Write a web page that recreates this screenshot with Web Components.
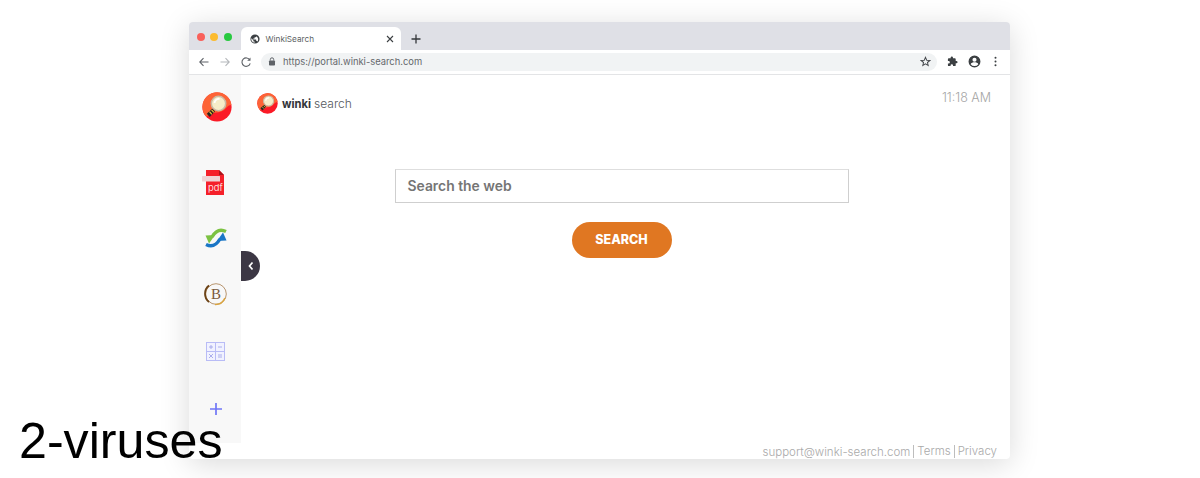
<!DOCTYPE html>
<html>
<head>
<meta charset="utf-8">
<title>WinkiSearch</title>
<style>
    html, body { margin: 0; height: 100%; background: #fff; }
    body { width: 1200px; height: 478px; overflow: hidden; position: relative; font-family: "Inter", "Liberation Sans", sans-serif; }
</style>
</head>
<body>
<browser-window>
    <browser-tabs slot="tabs" title="WinkiSearch"></browser-tabs>
    <browser-toolbar slot="toolbar" url="https://portal.winki-search.com"></browser-toolbar>
    <app-sidebar slot="side"></app-sidebar>
    <search-page slot="page"></search-page>
</browser-window>
<water-mark>2-viruses</water-mark>

<script>
    (() => {
        const logoSvg = `
            <svg viewBox="0 0 30 30" width="100%" height="100%">
                <circle cx="15" cy="15" r="14.6" fill="#fb1a26"/>
                <path d="M.5 15A14.5 14.5 0 0 1 29.4 13C24 13 24 20 15 20.500 9 20.800 6 23 4.500 25A14.500 14.500 0 0 1 .5 15Z" fill="#fd6336"/>
                <path d="M10.500 16.500 4.800 21.800 7.800 25 13 19.500Z" fill="#2b2620"/>
                <path d="M7.500 19.700 9.800 22.300M9.600 17.900 11.800 20.300" stroke="#e8c43a" stroke-width="1.200"/>
                <circle cx="16.500" cy="11.500" r="7.200" fill="#f6ecc8" stroke="#c9b9a4" stroke-width="1.500"/>
                <path d="M12.500 11A4.300 4.300 0 0 1 17.500 7" fill="none" stroke="#fff" stroke-width="1.800"/>
            </svg>`;

        const define = (name, css, html) => {
            customElements.define(name, class extends HTMLElement {
                constructor() {
                    super();
                    this.attachShadow({ mode: "open" }).innerHTML =
                        `<style>${css}</style>` + html(this);
                }
            });
        };

        define("browser-window", `
            :host {
                display: grid;
                position: absolute;
                left: 189px; top: 22px;
                width: 821px; height: 437px;
                grid-template-columns: 52px 1fr;
                grid-template-rows: 28px 25px 368px 16px;
                background: #fff;
                border-radius: 4px;
                box-shadow: 0 5px 30px rgba(0,0,0,.15);
                overflow: hidden;
            }
            .tabs, .toolbar { grid-column: 1 / 3; }
            .side { grid-column: 1; grid-row: 3; }
            .page { grid-column: 2; grid-row: 3 / 5; position: relative; }
        `, () => `
            <div class="tabs"><slot name="tabs"></slot></div>
            <div class="toolbar"><slot name="toolbar"></slot></div>
            <div class="side"><slot name="side"></slot></div>
            <div class="page"><slot name="page"></slot></div>
        `);

        define("browser-tabs", `
            :host { display: flex; height: 28px; background: #dfe0e6; align-items: flex-end; box-sizing: border-box; padding-left: 8px; }
            .lights { display: flex; gap: 5.400px; align-self: flex-start; margin-top: 10.500px; width: 44px; }
            .lights i { width: 8px; height: 8px; border-radius: 50%; flex: none; }
            .tab {
                width: 160px; height: 23px; box-sizing: border-box;
                background: #fff; border-radius: 6px 6px 0 0;
                display: flex; align-items: center; padding: 0 7px 0 9px; gap: 5.500px;
                font: 8.200px "Inter", "Liberation Sans", sans-serif; color: #5c5f63;
            }
            .tab span { flex: 1; }
            .new { margin: 0 0 4px 8px; width: 14px; height: 14px; display: block; }
        `, el => `
            <div class="lights"><i style="background:#f9605a"></i><i style="background:#fcbb2e"></i><i style="background:#28c940"></i></div>
            <div class="tab">
                <svg width="10" height="10" viewBox="0 0 24 24"><path fill="#3c4043" d="M12 1a11 11 0 1 0 0 22 11 11 0 0 0 0-22Zm-1 19.900A9 9 0 0 1 3.200 10L8 15v1a2 2 0 0 0 2 2h1Zm7-3A2 2 0 0 0 16 17h-1v-3a1 1 0 0 0-1-1H8v-2h2a1 1 0 0 0 1-1V8h2a2 2 0 0 0 2-2v-.9a9 9 0 0 1 3 12.800Z"/></svg>
                <span>${el.getAttribute("title")}</span>
                <svg width="8" height="8" viewBox="0 0 8 8"><path d="M1 1 7 7M7 1 1 7" stroke="#3c4043" stroke-width="1.100"/></svg>
            </div>
            <svg class="new" viewBox="0 0 14 14"><path d="M7 2.500V11.500M2.500 7H11.500" stroke="#34373b" stroke-width="1.300"/></svg>
        `);

        define("browser-toolbar", `
            :host { display: flex; align-items: center; height: 25px; box-sizing: border-box; background: #fff; border-bottom: 1px solid #e3e4e6; padding: 0 9px 1px 9px; }
            .nav { display: flex; align-items: center; gap: 9px; width: 63px; }
            .nav svg { display: block; }
            .omni {
                width: 676px; height: 18px; box-sizing: border-box;
                border-radius: 9px; background: #f1f3f4;
                display: flex; align-items: center; padding: 0 6px 0 7px; gap: 7px;
                font: 9.400px "Inter", "Liberation Sans", sans-serif; color: #65686c;
            }
            .omni span { flex: 1; }
            .ext { display: flex; align-items: center; gap: 10px; margin-left: 10px; }
            .dots { margin-left: 3px; }
        `, el => `
            <div class="nav">
                <svg width="12" height="12" viewBox="0 0 12 12"><path d="M10.500 6H2M5.500 2.200 1.800 6 5.500 9.800" fill="none" stroke="#5f6368" stroke-width="1.100"/></svg>
                <svg width="12" height="12" viewBox="0 0 12 12"><path d="M1.500 6H10M6.500 2.200 10.200 6 6.500 9.800" fill="none" stroke="#b4b7bb" stroke-width="1.100"/></svg>
                <svg width="12" height="12" viewBox="0 0 12 12"><path d="M9.800 4A4.200 4.200 0 1 0 10.200 7.300" fill="none" stroke="#5f6368" stroke-width="1.100"/><path d="M10.500 1.500V4.800H7.200Z" fill="#5f6368"/></svg>
            </div>
            <div class="omni">
                <svg width="8" height="9" viewBox="0 0 8 9"><rect x="1" y="3.500" width="6" height="5" rx=".8" fill="#5f6368"/><path d="M2.300 3.500V2.500a1.700 1.700 0 0 1 3.400 0v1" fill="none" stroke="#5f6368"/></svg>
                <span>${el.getAttribute("url")}</span>
                <svg width="11" height="11" viewBox="0 0 24 24"><path d="M12 3l2.700 6.200 6.700.6-5.100 4.400 1.600 6.600L12 17.300l-5.900 3.500 1.600-6.600L2.600 9.800l6.700-.6Z" fill="none" stroke="#4a4d51" stroke-width="2.200"/></svg>
            </div>
            <div class="ext">
                <svg width="11" height="11" viewBox="0 0 24 24"><path fill="#3c4043" d="M20.500 11H19V7a2 2 0 0 0-2-2h-4V3.500a2.500 2.500 0 0 0-5 0V5H4a2 2 0 0 0-2 2v3.800h1.500a2.700 2.700 0 0 1 0 5.400H2V20a2 2 0 0 0 2 2h3.800v-1.500a2.700 2.700 0 0 1 5.400 0V22H17a2 2 0 0 0 2-2v-4h1.500a2.500 2.500 0 0 0 0-5Z"/></svg>
                <svg width="13" height="13" viewBox="0 0 24 24"><path fill="#3c4043" d="M12 1a11 11 0 1 0 0 22 11 11 0 0 0 0-22Zm0 4a3.800 3.800 0 1 1 0 7.600A3.800 3.800 0 0 1 12 5Zm0 15.500a8.600 8.600 0 0 1-7-3.600c.1-2.300 4.700-3.500 7-3.500s6.900 1.200 7 3.500a8.600 8.600 0 0 1-7 3.600Z"/></svg>
                <svg class="dots" width="3" height="11" viewBox="0 0 3 11"><circle cx="1.500" cy="1.800" r="1" fill="#3c4043"/><circle cx="1.500" cy="5.500" r="1" fill="#3c4043"/><circle cx="1.500" cy="9.200" r="1" fill="#3c4043"/></svg>
            </div>
        `);

        define("app-sidebar", `
            :host { display: flex; flex-direction: column; align-items: center; height: 368px; background: #f8f8f8; box-sizing: border-box; padding-top: 17px; }
            svg { display: block; flex: none; }
            .logo { width: 30px; height: 30px; margin: 0 0 48px 3px; }
            .pdf { margin: 0 4px 33px 0; }
            .arrows { margin: 0 0 34px 1px; }
            .btc { margin: 0 0 36px 1px; }
            .calc { margin: 0 0 41px 1px; }
            .plus { margin-left: 1px; }
        `, () => `
            <div class="logo">${logoSvg}</div>
            <svg class="pdf" width="22" height="25" viewBox="0 0 22 25">
                <path d="M4 0H17L22 5V25H4Z" fill="#f5202a"/>
                <path d="M17 0 22 5H17Z" fill="#a9141b"/>
                <rect x="0" y="6" width="18" height="5.500" rx=".5" fill="#f0d4d6"/>
                <text x="6" y="20.500" font-family="Inter, sans-serif" font-weight="300" font-size="9.500" fill="#fff">pdf</text>
            </svg>
            <svg class="arrows" width="22" height="20" viewBox="0 0 22 20">
                <path d="M21 3.500C15 .5 10.500 3 7 9" fill="none" stroke="#7cc242" stroke-width="3.400"/>
                <path d="M.5 7.500 10 7 4 15.500Z" fill="#7cc242"/>
                <path d="M1 16.500C7 19.500 11.500 17 15 11" fill="none" stroke="#1a76c6" stroke-width="3.400"/>
                <path d="M21.500 12.500 12 13 18 4.500Z" fill="#1a76c6"/>
            </svg>
            <svg class="btc" width="24" height="24" viewBox="0 0 24 24">
                <circle cx="12" cy="12" r="10.300" fill="none" stroke="#b08a60" stroke-width=".9"/>
                <path d="M5 3.500A10.500 10.500 0 0 0 5 20" fill="none" stroke="#6b4216" stroke-width="1.800"/>
                <path d="M11 22.500A10.500 10.500 0 0 0 21 16" fill="none" stroke="#d9a441" stroke-width="1.600"/>
                <text x="12" y="17" text-anchor="middle" font-family="Liberation Serif, serif" font-size="15" fill="#7a5a3c">B</text>
            </svg>
            <svg class="calc" width="19" height="19" viewBox="0 0 19 19">
                <rect x=".5" y=".5" width="18" height="18" fill="#f1f2ff" stroke="#b9bcf6"/>
                <path d="M9.500 .5V18.500M.5 9.500H18.500" stroke="#b9bcf6"/>
                <path d="M3 5H7M5 3V7M12 5H16M3 12 7 16M7 12 3 16M12 13H16M12 15H16" stroke="#a3a6ea" stroke-width=".9"/>
            </svg>
            <svg class="plus" width="14" height="14" viewBox="0 0 14 14"><path d="M7 1V13M1 7H13" stroke="#7076f6" stroke-width="1.700"/></svg>
        `);

        define("search-page", `
            :host { display: flex; flex-direction: column; height: 384px; box-sizing: border-box; font-family: "Inter", "Liberation Sans", sans-serif; }
            header { display: flex; justify-content: space-between; padding: 17px 19px 0 16px; height: 94px; box-sizing: border-box; }
            .brand { display: flex; align-items: center; height: 23px; gap: 4px; }
            .brand .mark { width: 21px; height: 21px; }
            .brand b { font-size: 11.200px; font-weight: 700; color: #33343a; }
            .brand span { font-size: 12px; font-weight: 300; color: #55575c; margin-left: -1px; }
            .time { font-size: 12.500px; font-weight: 300; color: #a5a5a5; line-height: 16px; margin-top: -2px; }
            main { display: flex; flex-direction: column; align-items: center; gap: 19px; padding-right: 8px; }
            .box {
                width: 454px; height: 34px; box-sizing: border-box;
                border: 1px solid #cfcfcf; border-top-color: #dedede;
                display: flex; align-items: center; padding: 0 0 1px 12px;
                font-size: 13.900px; font-weight: 600; color: #757575;
            }
            .btn {
                width: 100px; height: 36px; border-radius: 18px; box-sizing: border-box; padding-bottom: 1px;
                background: #e07722; color: #fff;
                display: flex; align-items: center; justify-content: center;
                font-size: 12.500px; font-weight: 800;
            }
            footer {
                margin-top: auto; display: flex; justify-content: flex-end; align-items: center;
                padding: 0 13px 0 0; height: 15px;
                font-size: 11.500px; font-weight: 300; color: #a9a9a9;
            }
            footer span + span { border-left: 1px solid #bdbdbd; margin-left: 3px; padding-left: 3px; line-height: 13px; }
            .toggle {
                position: absolute; left: 0; top: 176px;
                width: 19px; height: 30px; border-radius: 0 15px 15px 0;
                background: #3c3744; display: flex; align-items: center; justify-content: center;
            }
        `, () => `
            <header>
                <div class="brand"><div class="mark">${logoSvg}</div><b>winki</b><span>search</span></div>
                <div class="time">11:18 AM</div>
            </header>
            <main>
                <div class="box">Search the web</div>
                <div class="btn">SEARCH</div>
            </main>
            <footer><span>support@winki-search.com</span><span>Terms</span><span>Privacy</span></footer>
            <div class="toggle"><svg width="8" height="10" viewBox="0 0 8 10"><path d="M5.500 1.500 2.500 5 5.500 8.500" fill="none" stroke="#fff" stroke-width="1.700"/></svg></div>
        `);

        define("water-mark", `
            :host { position: absolute; left: 19px; top: 413px; font: 50.200px/56px "Liberation Sans", Arial, sans-serif; color: #000; }
        `, () => `<slot></slot>`);
    })();
</script>
</body>
</html>
